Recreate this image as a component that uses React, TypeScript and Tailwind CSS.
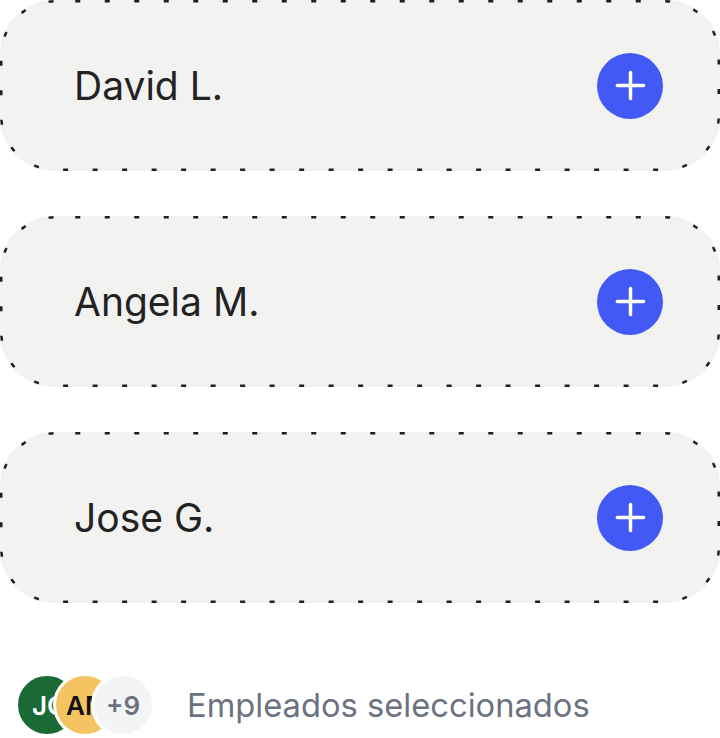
import { Plus } from "lucide-react";

type Person = { id: string; name: string };

const people: Person[] = [
  { id: "david", name: "David L." },
  { id: "angela", name: "Angela M." },
  { id: "jose", name: "Jose G." },
];

// dashed outline drawn over the card, css dashed can't do this spacing
const DashedOutline = () => (
  <svg
    className="pointer-events-none absolute inset-0"
    width="720"
    height="171"
    viewBox="0 0 720 171"
    aria-hidden="true"
  >
    <rect
      x="1.25"
      y="1.25"
      width="717.5"
      height="168.5"
      rx="54"
      ry="54"
      fill="none"
      stroke="#1f1f1f"
      strokeWidth="2.5"
      strokeDasharray="5 24.5"
      strokeDashoffset="-20"
    />
  </svg>
);

const PersonCard = ({ person }: { person: Person }) => (
  <article className="relative flex h-[171px] w-[720px] items-center justify-between rounded-[54px] bg-[#f2f2f1] pl-[74px] pr-[57px]">
    <DashedOutline />
    <p className="text-[39px] leading-none text-[#222222]">{person.name}</p>
    <button
      type="button"
      aria-label={`Añadir ${person.name}`}
      className="flex h-[66px] w-[66px] items-center justify-center rounded-full bg-[#4359f6] text-white"
    >
      <Plus size={45} strokeWidth={1.85} />
    </button>
  </article>
);

const Avatar = ({
  label,
  className,
}: {
  label: string;
  className: string;
}) => (
  <div
    className={`flex h-[64px] w-[64px] shrink-0 items-center justify-center overflow-hidden rounded-full border-[3px] border-white text-[26px] font-semibold ${className}`}
  >
    {label}
  </div>
);

export default function App() {
  return (
    <div
      className="flex min-h-screen w-[720px] flex-col bg-white"
      style={{ fontFamily: "Inter, 'Noto Sans', sans-serif" }}
    >
      <div className="flex flex-col gap-[45px]">
        {people.map((p) => (
          <PersonCard key={p.id} person={p} />
        ))}
      </div>

      <div className="mt-[70px] flex items-center pl-[15px]">
        <div className="flex -space-x-[26px]">
          <Avatar label="JO" className="z-0 justify-start bg-[#1b6a35] pl-[14px] text-white" />
          <Avatar label="AM" className="z-10 justify-start bg-[#f5c462] pl-[10px] text-[#111111]" />
          <Avatar label="+9" className="z-20 bg-[#f3f4f6] font-medium text-[#6b7280]" />
        </div>
        <span className="ml-[32px] text-[32.7px] leading-none text-[#6b7280]">
          Empleados seleccionados
        </span>
      </div>
    </div>
  );
}
